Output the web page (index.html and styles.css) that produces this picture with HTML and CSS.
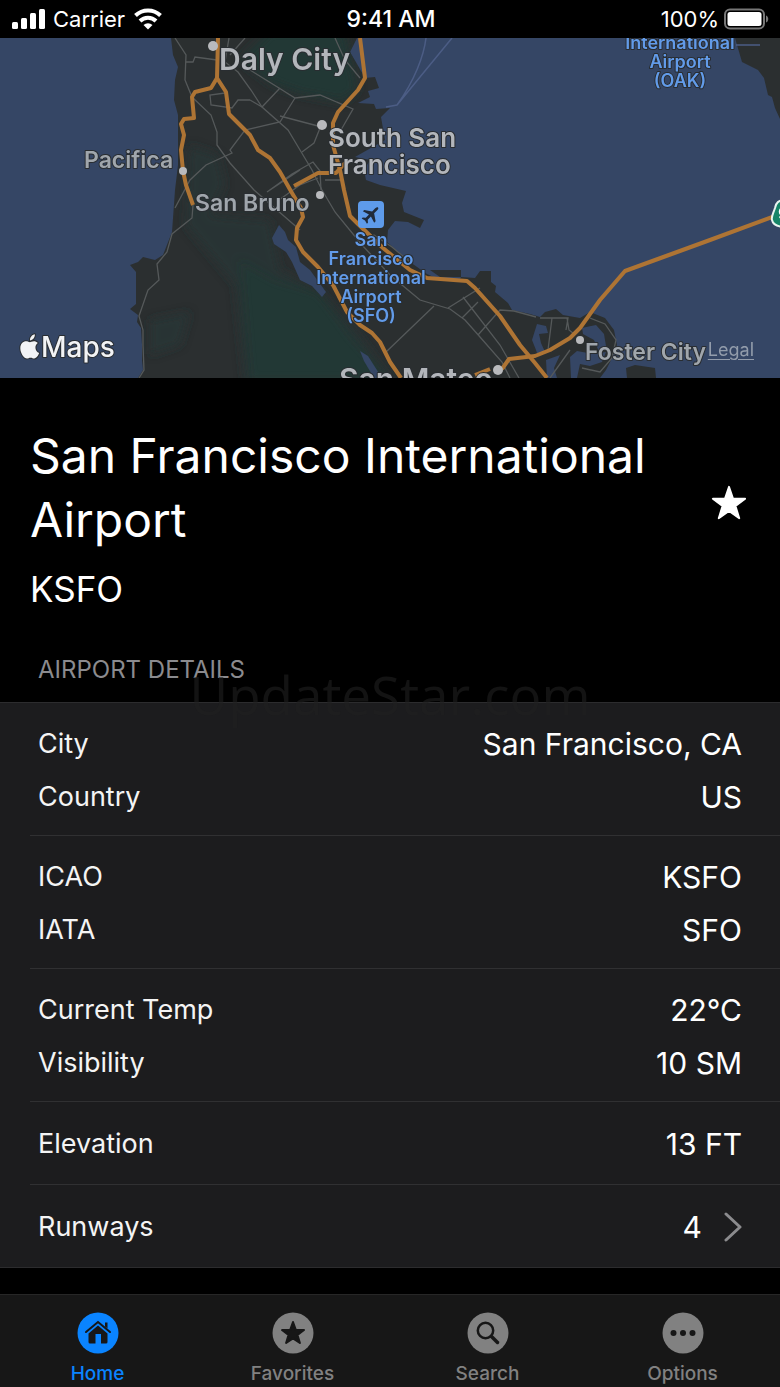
FILE: index.html
```html
<!DOCTYPE html>
<html lang="en">
<head>
<meta charset="utf-8">
<meta name="viewport" content="width=device-width, initial-scale=1">
<title>San Francisco International Airport</title>
<link rel="stylesheet" href="styles.css">
</head>
<body>
<div class="app">
  <div class="status">
    <div class="status-left">
      <svg class="signal" width="33" height="22" viewBox="0 0 33 22" aria-hidden="true">
        <rect x="0" y="14" width="6" height="7" rx="1.5"/><rect x="9" y="10" width="6" height="11" rx="1.5"/><rect x="18" y="5" width="6" height="16" rx="1.5"/><rect x="27" y="1" width="6" height="20" rx="1.5"/>
      </svg>
      <span>Carrier</span>
      <svg width="30" height="22" viewBox="0 0 30 22" aria-hidden="true">
        <path class="wave" d="M2.500 7.500a18 18 0 0 1 25 0M7 13a11.500 11.500 0 0 1 16 0"/>
        <path d="M10.500 17a7 7 0 0 1 9 0L15 21.500z"/>
      </svg>
    </div>
    <div class="status-time">9:41 AM</div>
    <div class="status-right">
      <span>100%</span>
      <svg width="46" height="22" viewBox="0 0 46 22" aria-hidden="true">
        <rect class="battery" x="1" y="1.500" width="39" height="19" rx="5"/>
        <rect x="3.500" y="4" width="34" height="14" rx="2.500"/>
        <path class="battery-tip" d="M42 7.500c3 1 3 6 0 7z"/>
      </svg>
    </div>
  </div>

  <div class="map">
    <svg class="map-canvas" viewBox="0 38 780 340" preserveAspectRatio="xMidYMid slice" role="img" aria-label="Map of San Francisco International Airport">
      <defs>
        <filter id="soft" x="-20%" y="-20%" width="140%" height="140%"><feGaussianBlur stdDeviation="5"/></filter>
        <clipPath id="land"><path d="M171 38L173 55 178 67 175 80 174 100 178 115 178 165 175 190 172 232 163 255 155 260 143 257 138 262 130 265 136 272 136 304 130 309 138 315 137 322 141 328 142 345 142 360 143 370 138 378H600L606 370 612 358 617 345 614 330 605 318 590 312 580 318 563 315 556 309 545 312 540 317 530 314 512 310 508 303 495 292 496 286 491 282 491 271 480 271 475 278 461 277 460 279 438 279 427 274 410 262 387 242 388 230 395 221 408 222 420 228 424 220 404 212 402 203 406 191 380 185 366 180 364 170 370 160 355 157 385 140 381 117 390 108 376 109 374 104 358 103 370 97 368 91 379 88 375 77 365 78 357 64 350 52 357 38Z"/></clipPath>
      </defs>
      <rect class="sea" y="38" width="780" height="340"/>
      <g clip-path="url(#land)">
        <rect class="ground" y="38" width="780" height="340"/>
        <g class="park" filter="url(#soft)">
          <path d="M270 30H345L358 90 343 102 300 94 272 84 240 60Z"/>
          <path d="M190 145L218 155 225 185 210 215 270 220 280 270 320 292 355 330 395 385H245L235 285 185 225Z" opacity=".6"/>
          <path d="M240 260L275 280 320 292 350 335 390 380H250Z"/>
          <path d="M150 320L190 312 180 345 150 355Z" opacity=".6"/>
        </g>
      </g>
      <path class="ground" d="M627 378L626 368 635 365 655 368 656 378ZM735 38L742 62 758 70 764 78 768 95 772 97 775 108 780 119V38ZM430 270H461V277H440Z"/>
      <g class="sea">
        <path d="M279 225L285 232 288 240 296 247 300 262 310 270 326 292 322 297 312 286 300 280 292 262 286 252 274 244 272 238Z"/>
        <path d="M360 351L368 356 382 378H374L364 361Z"/>
        <path d="M537 324L546 326 548 333 539 334 541 343 545 352 538 356 536 350 532 340Z"/>
        <path d="M582 328L596 325 604 334 606 346 600 354 594 340 583 334Z"/>
        <path d="M570 357L577 351 594 354 606 352 602 362 590 366 580 364 577 378H571Z"/>
        <path d="M546 360L560 355 554 368 557 378H547Z"/>
      </g>
      <g class="street">
        <path d="M175 38L186 55 185 80 192 97 211 115 217 132 217 145 230 163 254 190 300 230"/>
        <path d="M186 62H193L195 57 217 60M229 38L225 62 238 72 251 90 262 107 288 130 300 150 312 170 322 190 335 212 362 245 390 275 420 300 450 309 465 320 480 337 502 362 510 378"/>
        <path d="M245 38L230 55M250 70L279 88 295 98 320 95 353 109 341 130M295 98L280 122 245 130 230 150 232 153 206 165 190 180 175 208M280 88L262 107M250 100H238L232 108 211 105 210 95 225 93M262 107L250 100"/>
        <path d="M280 116L318 126M320 128L314 143 302 152M267 192L292 174 313 162 320 171 321 190M267 192L300 170M325 180H340M279 200L300 185 318 178"/>
        <path d="M335 38L345 60 360 78M386 352L434 306M448 308L480 288M463 297L500 345 519 378M462 318L478 302M478 335L500 310 514 311 536 317M540 318L568 318 566 330M552 318L548 350M567 318L569 330 574 334M590 318L605 324 616 340 612 358 600 372 582 368M550 378L570 350"/>
        <path d="M362 246L374 235 392 247 410 262M193 205L192 218 172 234 167 252 157 264 159 280 148 290 139 316 143 330V345L144 370 139 378"/>
      </g>
      <path class="ferry" d="M426 38C424 55 415 80 397 105M452 38L397 105 386 107M736 45H760"/>
      <g class="road">
        <path d="M218 38L217 78 211 88 195 92 192 97 194 118 184 119 181 124 184 135 181 150 183 171 186 185 193 205"/>
        <path d="M217 78L226 92 229 114 250 135 258 150 270 158 280 172 292 193 301 208 303 217 297 228 296 240 303 252 318 267 333 285 347 312 360 325 372 333 380 342 390 362 401 378"/>
        <path d="M360 38L365 78 358 90 338 112 333 123 333 145 340 170 344 190 350 216 358 224 383 248 410 270 427 278 467 281 475 288 500 316 520 345 535 363 547 378"/>
        <path d="M294 186L318 173 336 173 345 163M475 375L490 369M502 369L509 359 535 356 550 350 570 338 580 328 600 300 625 271 710 240 780 214"/>
      </g>
      <path class="shield" d="M786 200c-8 0-10 3-11 8-2 6-4 9-3 12 1 5 5 7 14 7h8v-27z"/>
      <text class="shield-text" x="778" y="220">92</text>
      <g class="dots">
        <circle cx="213" cy="46" r="5"/><circle cx="322" cy="125" r="5"/><circle cx="183" cy="171" r="4"/><circle cx="320" cy="195" r="4"/><circle cx="580" cy="340" r="4"/><circle cx="498" cy="370" r="5"/>
      </g>
      <g class="town">
        <text class="big" x="219" y="70">Daly City</text>
        <text class="mid" x="328" y="147">South San</text>
        <text class="mid" x="328" y="174">Francisco</text>
        <text class="small" x="84" y="168">Pacifica</text>
        <text class="small" x="195" y="211">San Bruno</text>
        <text class="small" x="585" y="360">Foster City</text>
        <text class="big" x="339" y="390">San Mateo</text>
      </g>
      <g class="airport">
        <text x="371" y="246">San</text><text x="371" y="265">Francisco</text><text x="371" y="284">International</text><text x="371" y="303">Airport</text><text x="371" y="322">(SFO)</text>
        <text x="680" y="49">International</text><text x="680" y="68">Airport</text><text x="680" y="87">(OAK)</text>
      </g>
      <rect class="plane-tile" x="358" y="201" width="26" height="27" rx="4"/>
      <path class="plane" transform="translate(371 214.500) rotate(45)" d="M0-10c1 0 1.400 1.500 1.400 3v4L8 1.500v2L1.400 1.500v4.500l2.300 2V9.500L0 8.500l-3.700 1V8l2.300-2V1.500L-8 3.500v-2L-1.400-3v-4c0-1.500.4-3 1.400-3z"/>
      <g class="brand">
        <path d="M37.800 343c-2-2.400-4.800-2-6.500-1.200-1.200.5-1.700.5-3 0-3.500-1.500-8 .9-8 6.400 0 5.300 4 10.300 6.600 10.300 1.500 0 2-.8 3.700-.8s2 .8 3.600.8c2.300 0 4.200-3.200 5-5.400-4.700-2-4.800-8-1.400-10.100zM30 340.500c-.3-3 2-5.800 4.800-6.200.4 3.200-2 6-4.800 6.200z"/>
        <text x="41" y="357">Maps</text>
      </g>
    </svg>
    <a class="legal" href="#legal">Legal</a>
  </div>

  <header class="title">
    <div class="title-text">
      <h1>San Francisco International Airport</h1>
      <p>KSFO</p>
    </div>
    <button class="favorite" type="button" aria-label="Favorite">
      <svg width="38" height="38" viewBox="0 0 40 40" aria-hidden="true"><path d="M20 3l4.300 12.500H37L26.800 23.200 30.800 36 20 28.300 9.200 36l4-12.800L3 15.500h12.700z"/></svg>
    </button>
  </header>

  <main class="details">
    <h2>AIRPORT DETAILS</h2>
    <div class="watermark" aria-hidden="true">UpdateStar.com</div>
    <div class="list">
      <dl class="group"><div class="row"><dt>City</dt><dd>San Francisco, CA</dd></div><div class="row"><dt>Country</dt><dd>US</dd></div></dl>
      <dl class="group"><div class="row"><dt>ICAO</dt><dd>KSFO</dd></div><div class="row"><dt>IATA</dt><dd>SFO</dd></div></dl>
      <dl class="group"><div class="row"><dt>Current Temp</dt><dd>22°C</dd></div><div class="row"><dt>Visibility</dt><dd>10 SM</dd></div></dl>
      <dl class="group single"><div class="row"><dt>Elevation</dt><dd>13 FT</dd></div></dl>
      <a class="group single" href="#runways"><span class="row"><span class="label">Runways</span><span class="value">4<svg width="18" height="30" viewBox="0 0 18 30" aria-hidden="true"><path d="M2 2l14 13L2 28"/></svg></span></span></a>
    </div>
  </main>

  <nav class="tabs">
    <a class="tab active" href="#home"><svg width="42" height="42" viewBox="0 0 42 42" aria-hidden="true"><circle cx="21" cy="21" r="20.500"/><path class="line" d="M9 20L21 10l12 10"/><path class="ink" d="M28 10.500h2.500v6L28 14.500zM21 13.500l9.500 8V30q0 1.500-1.500 1.500h-5V22h-5.500v9.500H13q-1.500 0-1.500-1.500v-8.500z"/></svg>Home</a>
    <a class="tab" href="#favorites"><svg width="42" height="42" viewBox="0 0 42 42" aria-hidden="true"><circle cx="21" cy="21" r="20.500"/><path class="ink star" d="M21 10l2.900 8H32l-6.500 5 2.400 8L21 26.300 14.100 31l2.400-8L10 18h8.100z"/></svg>Favorites</a>
    <a class="tab" href="#search"><svg width="42" height="42" viewBox="0 0 42 42" aria-hidden="true"><circle cx="21" cy="21" r="20.500"/><circle class="line lens" cx="18.500" cy="18.500" r="7.700"/><path class="line handle" d="M24.500 24.500l6 6"/></svg>Search</a>
    <a class="tab" href="#options"><svg width="42" height="42" viewBox="0 0 42 42" aria-hidden="true"><circle cx="21" cy="21" r="20.500"/><g class="ink"><circle cx="11.500" cy="21" r="3"/><circle cx="21" cy="21" r="3"/><circle cx="30.500" cy="21" r="3"/></g></svg>Options</a>
  </nav>
</div>
</body>
</html>
```
FILE: styles.css
```css
* { box-sizing: border-box; }
body, h1, h2, p, dl, dd { margin: 0; font-weight: 400; }
body { background: #000; color: #fff; font-family: Inter, "Liberation Sans", sans-serif; }
a { color: inherit; text-decoration: none; }
.app { display: flex; flex-direction: column; min-height: 100vh; }

.status { display: grid; grid-template-columns: 1fr auto 1fr; align-items: center; height: 38px; padding: 0 10px 0 12px; font-size: 22px; }
.status svg { fill: #fff; flex: none; }
.status-left, .status-right { display: flex; align-items: center; gap: 8px; }
.status-right { justify-content: flex-end; gap: 5px; }
.status-time { font-size: 23px; font-weight: 500; }
.status .wave { fill: none; stroke: #fff; stroke-width: 4; }
.status .battery { fill: none; stroke: #777; stroke-width: 2; }
.status .battery-tip { fill: #777; }

.map { position: relative; height: 340px; overflow: hidden; }
.map-canvas { display: block; width: 100%; height: 100%; }
.sea { fill: #354665; }
.ground { fill: #2b2f30; }
.park { fill: #243735; }
.street { fill: none; stroke: #55595a; stroke-width: 1.3; }
.ferry { fill: none; stroke: #4c5d85; stroke-width: 1.5; }
.road { fill: none; stroke: #ae7434; stroke-width: 4; stroke-linejoin: round; }
.shield { fill: #168568; stroke: #e8f4f0; stroke-width: 2; }
.shield-text { fill: #fff; font-size: 18px; font-weight: 700; }
.dots { fill: #b9babd; }
.town, .airport, .brand { paint-order: stroke; stroke: #292d31; stroke-width: 2; stroke-linejoin: round; }
.town { fill: #b3b6bb; font-weight: 600; }
.big { font-size: 30px; }
.mid { font-size: 26px; }
.small { font-size: 23px; fill: #a0a6ac; }
.airport { fill: #629be9; font-size: 18px; font-weight: 600; text-anchor: middle; }
.plane-tile { fill: #5e9bea; }
.plane { fill: #202b3b; stroke: none; }
.brand { fill: #f2f3f5; font-size: 28px; font-weight: 500; }
.legal { position: absolute; right: 26px; bottom: 17px; color: #929cab; font-size: 18px; line-height: 22px; text-decoration: underline; text-underline-offset: 3px; }

.title { display: flex; align-items: center; justify-content: space-between; gap: 32px; padding: 46px 32px 27px 30px; }
.title h1 { font-size: 48px; line-height: 64px; }
.title p { margin-top: 14px; font-size: 35px; line-height: 46px; }
.favorite { flex: none; display: flex; margin-bottom: 30px; padding: 0; border: 0; background: none; }
.favorite svg { fill: #fff; stroke: #fff; stroke-width: 2; stroke-linejoin: round; }

.details { position: relative; }
.details h2 { padding: 14px 38px 15px; color: #8b8b8f; font-size: 24px; line-height: 34px; }
.watermark { position: absolute; top: 24px; left: 0; right: 0; color: rgba(32, 32, 32, .6); font: 53px/64px "Open Sans", sans-serif; text-align: center; pointer-events: none; }
.list { border-top: 1px solid #2c2c2e; border-bottom: 1px solid #2c2c2e; background: #1c1c1e; }
.group { display: block; margin-left: 30px; padding: 14px 38px 12px 8px; border-bottom: 1px solid #303032; }
.group.single { padding-top: 15px; padding-bottom: 14px; }
.group:last-child { border-bottom: 0; }
.row { display: flex; align-items: center; justify-content: space-between; height: 53px; }
.row dt, .label { font-size: 27px; color: #f4f4f4; }
.row dd, .value { display: flex; align-items: center; gap: 22px; font-size: 30px; }
.value svg { fill: none; stroke: #8b8b8e; stroke-width: 3; stroke-linecap: round; stroke-linejoin: round; }

.tabs { display: grid; grid-template-columns: repeat(4, 1fr); margin-top: auto; border-top: 1px solid #272727; background: #171717; }
.tab { display: flex; flex-direction: column; align-items: center; gap: 8px; padding: 17px 0 2px; color: #818181; font-size: 19px; font-weight: 500; line-height: 23px; }
.tab svg { fill: currentColor; }
.tab.active { color: #0a84ff; }
.tab .ink { fill: #171717; }
.tab .line { fill: none; stroke: #171717; stroke-width: 2; stroke-linecap: round; }
.tab .lens { stroke-width: 2.5; }
.tab .handle { stroke-width: 3.5; }
.tab .star { stroke: #171717; stroke-width: 2; stroke-linejoin: round; }
```
